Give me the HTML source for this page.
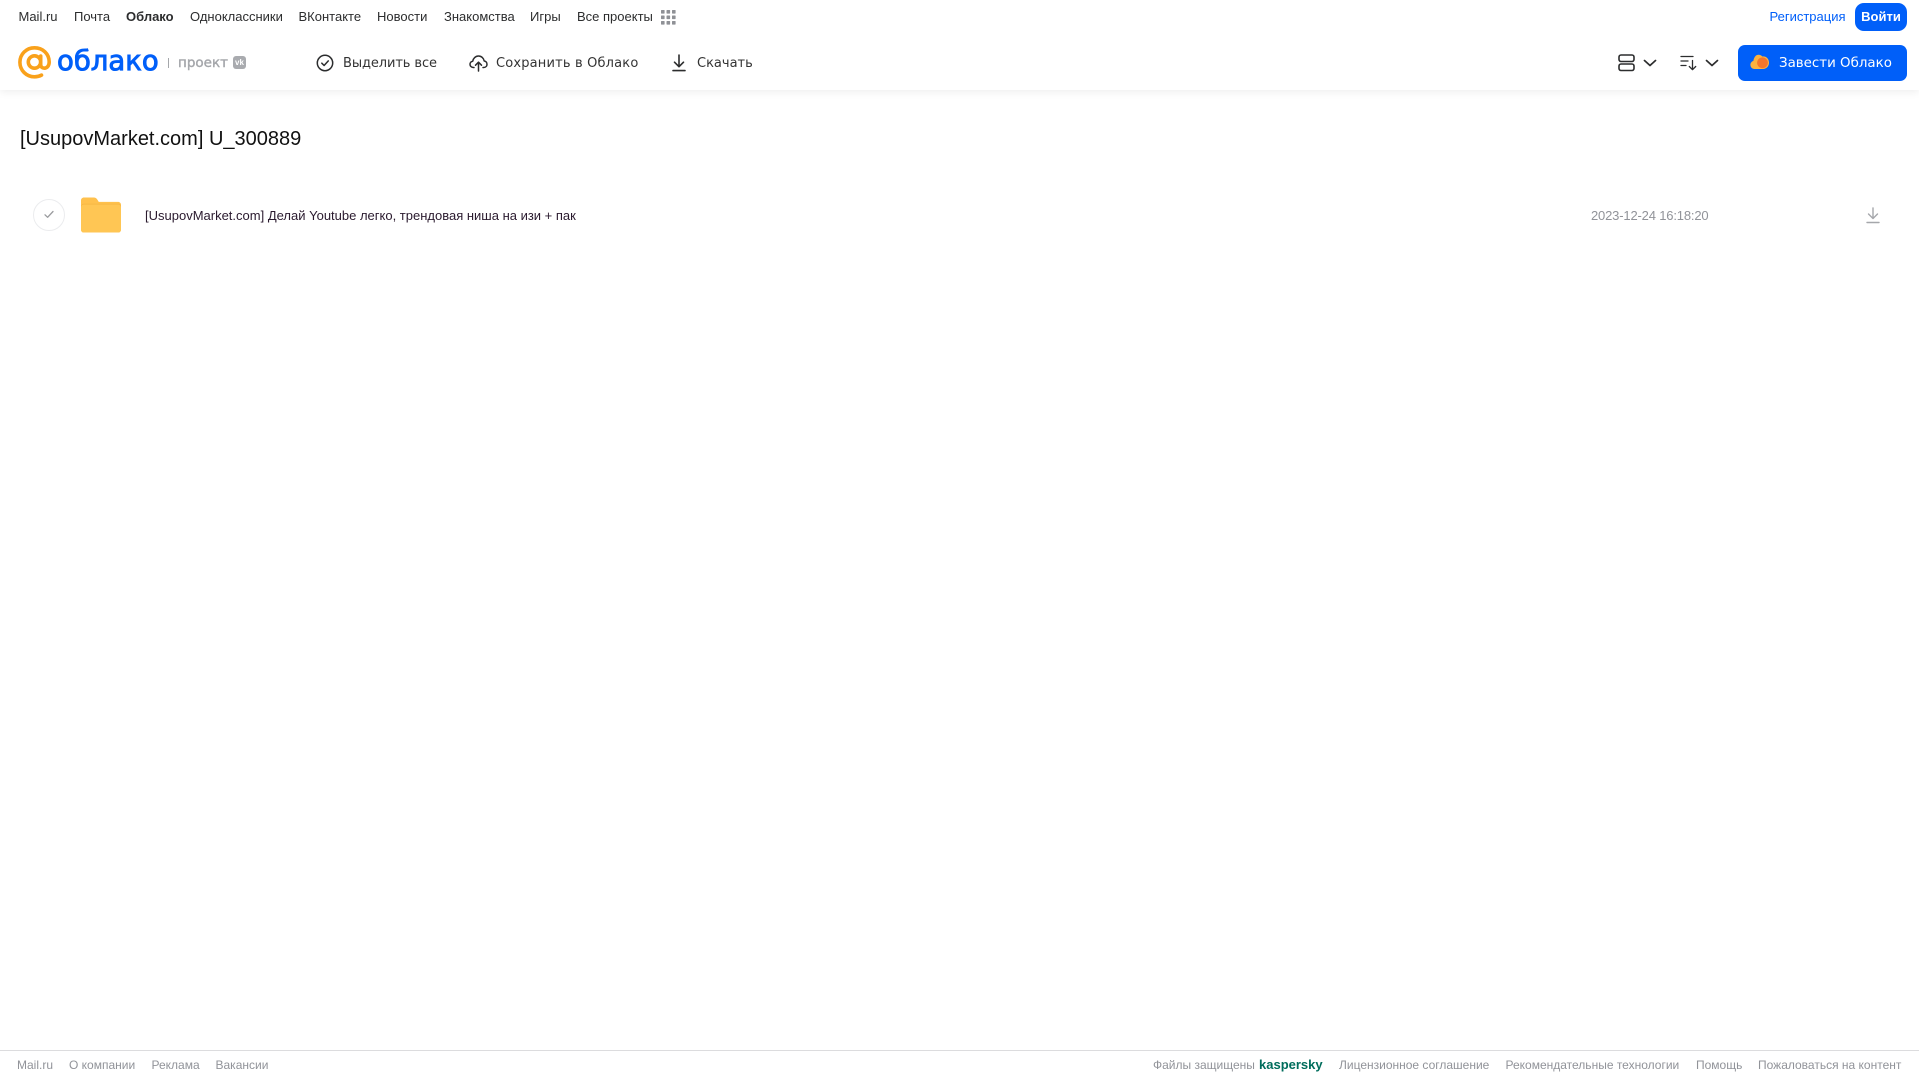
<!DOCTYPE html>
<html lang="ru">
<head>
<meta charset="utf-8">
<title>Облако</title>
<style>
html,body{margin:0;padding:0;background:#fff;}
body{width:1919px;height:1079px;position:relative;overflow:hidden;font-family:"Liberation Sans",Arial,sans-serif;}
.t{position:absolute;white-space:nowrap;line-height:20px;}
.n{top:7px;font-size:13px;color:#2c2d2e;}
.b{top:54px;font-size:13px;color:#333;font-family:"DejaVu Sans",sans-serif;}
.f{top:1055px;font-size:12px;color:#919399;}
svg{position:absolute;overflow:visible;}
#hdr{position:absolute;left:0;top:0;width:1919px;height:90px;background:#fff;box-shadow:0 2px 8px rgba(0,0,0,.07);}
</style>
</head>
<body>
<div id="hdr"></div>
<span class="t n" style="left:18.500px">Mail.ru</span>
<span class="t n" style="left:74px">Почта</span>
<span class="t n" style="left:126px;font-weight:bold">Облако</span>
<span class="t n" style="left:190px">Одноклассники</span>
<span class="t n" style="left:298.500px">ВКонтакте</span>
<span class="t n" style="left:377px">Новости</span>
<span class="t n" style="left:444px">Знакомства</span>
<span class="t n" style="left:530px">Игры</span>
<span class="t n" style="left:577px">Все проекты</span>
<svg style="left:661px;top:10px" width="15" height="15" fill="#8f9196">
<rect x="0" y="0" width="3.6" height="3.6" rx=".6"/><rect x="5.5" y="0" width="3.6" height="3.6" rx=".6"/><rect x="11" y="0" width="3.6" height="3.6" rx=".6"/>
<rect x="0" y="5.5" width="3.6" height="3.6" rx=".6"/><rect x="5.5" y="5.5" width="3.6" height="3.6" rx=".6"/><rect x="11" y="5.5" width="3.6" height="3.6" rx=".6"/>
<rect x="0" y="11" width="3.6" height="3.6" rx=".6"/><rect x="5.5" y="11" width="3.6" height="3.6" rx=".6"/><rect x="11" y="11" width="3.6" height="3.6" rx=".6"/>
</svg>
<span class="t" style="left:1769.500px;top:7px;font-size:13px;color:#005ff9">Регистрация</span>
<div style="position:absolute;left:1855px;top:3px;width:52px;height:28px;border-radius:9px;background:#005ff9;color:#fff;font-size:13px;font-weight:bold;line-height:27px;text-align:center">Войти</div>

<svg style="left:18px;top:46px" width="34" height="34" viewBox="0 0 34 34" fill="none" stroke="#f9a11b" stroke-width="3.6" stroke-linecap="round">
<circle cx="16.5" cy="16" r="6.2"/>
<path d="M22.7 10v8.5c0 2.4 1.6 3.7 3.6 3.7 2.6 0 4.9-2.2 4.9-6.2C31.200 7.700 24.700 1.800 16.500 1.800 8.300 1.800 1.900 8.200 1.900 16.300c0 8.100 6.400 14.500 14.600 14.500 2.700 0 4.900-.6 7-1.700"/>
</svg>
<span class="t" style="left:57px;top:44px;font-size:27.500px;line-height:34px;color:#005ff9;font-family:'DejaVu Sans',sans-serif;-webkit-text-stroke:.9px #005ff9;">облако</span>
<div style="position:absolute;left:168px;top:58px;width:1px;height:10px;background:#a5a7ab"></div>
<span class="t" style="left:178px;top:53px;font-size:13.500px;color:#a5a7ab;font-family:'DejaVu Sans',sans-serif;-webkit-text-stroke:.4px #a5a7ab">проект</span>
<div style="position:absolute;left:233px;top:56px;width:13px;height:13px;border-radius:3px;background:#a9abaf;color:#fff;font-size:8px;font-weight:bold;line-height:13px;text-align:center">vk</div>

<svg style="left:316px;top:54px" width="18" height="18" viewBox="0 0 18 18" fill="none" stroke="#2c2d2e" stroke-width="1.500" stroke-linecap="round" stroke-linejoin="round">
<circle cx="9" cy="9" r="7.700"/><path d="M5.800 9.200l2.300 2.300 4.200-4.600"/>
</svg>
<span class="t b" style="left:343px;letter-spacing:-.1px">Выделить все</span>
<svg style="left:469px;top:54px" width="19" height="18" viewBox="0 0 19 18" fill="none" stroke="#2c2d2e" stroke-width="1.500" stroke-linecap="round" stroke-linejoin="round">
<path d="M5 13.500H4.300C2.300 13.500 1 12 1 10.300c0-1.600 1.100-2.900 2.700-3.100C4.200 4.300 6.500 2 9.500 2c2.900 0 5.200 2.200 5.700 5 1.600.2 2.800 1.500 2.800 3.200 0 1.800-1.300 3.300-3.300 3.300H14"/>
<path d="M9.500 17V8.500M6.500 11.200l3-3 3 3"/>
</svg>
<span class="t b" style="left:496px;letter-spacing:.17px">Сохранить в Облако</span>
<svg style="left:671px;top:54px" width="16" height="18" viewBox="0 0 16 18" fill="none" stroke="#2c2d2e" stroke-width="1.600" stroke-linecap="round" stroke-linejoin="round">
<path d="M8 1v11.500M3.500 8.200L8 12.700l4.500-4.500M2 16.600h12"/>
</svg>
<span class="t b" style="left:697px">Скачать</span>

<svg style="left:1618px;top:54px" width="18" height="18" viewBox="0 0 18 18" fill="none" stroke="#2c2d2e" stroke-width="1.600">
<rect x="1" y="1" width="15" height="6.500" rx="2"/><rect x="1" y="10" width="15" height="6.500" rx="2"/>
</svg>
<svg style="left:1643px;top:59px" width="14" height="8" viewBox="0 0 14 8" fill="none" stroke="#2c2d2e" stroke-width="1.700" stroke-linecap="round" stroke-linejoin="round"><path d="M1.500 1.500L7 6.500l5.500-5"/></svg>
<svg style="left:1680px;top:55px" width="18" height="16" viewBox="0 0 18 16" fill="none" stroke="#2c2d2e" stroke-width="1.300" stroke-linecap="round" stroke-linejoin="round">
<path d="M1 1.500h12M1 6h7M1 10.500h5M12.500 5.500v9M9.300 11.500l3.200 3.200 3.200-3.200"/>
</svg>
<svg style="left:1705px;top:59px" width="14" height="8" viewBox="0 0 14 8" fill="none" stroke="#2c2d2e" stroke-width="1.700" stroke-linecap="round" stroke-linejoin="round"><path d="M1.500 1.500L7 6.500l5.500-5"/></svg>

<div style="position:absolute;left:1738px;top:45px;width:169px;height:36px;border-radius:7px;background:#005ff9"></div>
<svg style="left:1750px;top:54px" width="20" height="17" viewBox="0 0 20 17">
<path d="M6.500 1.200C8.600.2 11 .8 12.300 2.500c3-.6 6.700 1.700 6.700 6.300 0 3.700-2.800 6.200-6 6.200H4.500C2 15 .4 13 .4 10.900c0-2 1.400-3.500 3-4C3.700 4.500 4.800 2.200 6.500 1.200z" fill="#fcb23f"/>
<circle cx="12.500" cy="8.800" r="5.400" fill="#f4762c"/>
</svg>
<span class="t" style="left:1779px;top:54px;font-size:13.400px;color:#fff;font-family:'DejaVu Sans',sans-serif">Завести Облако</span>

<span class="t" style="left:20px;top:127px;font-size:20px;line-height:24px;color:#111">[UsupovMarket.com] U_300889</span>

<div style="position:absolute;left:33px;top:199px;width:30px;height:30px;border:1px solid #ebecee;border-radius:50%"></div>
<svg style="left:44px;top:210px" width="10" height="9" viewBox="0 0 10 9" fill="none" stroke="#9a9b9e" stroke-width="1.300" stroke-linecap="round" stroke-linejoin="round"><path d="M1 4.800l2.600 2.500L9 1.500"/></svg>
<svg style="left:81px;top:197px" width="40" height="36" viewBox="0 0 41 36">
<path d="M0 3C0 1.300 1.300 0 3 0h10c1.800 0 2.800.8 3.600 2l1.600 2.500H38c1.700 0 3 1.300 3 3V33c0 1.700-1.300 3-3 3H3c-1.700 0-3-1.300-3-3z" fill="#ffc14d"/>
<path d="M0 9.500C0 7.800 1.300 6.500 3 6.500h35c1.700 0 3 1.300 3 3V33c0 1.700-1.300 3-3 3H3c-1.700 0-3-1.300-3-3z" fill="#ffc654" />
<path d="M0 9.500C0 7.800 1.300 6.500 3 6.500h35c1.700 0 3 1.300 3 3v.8c0-1.700-1.300-3-3-3H3c-1.700 0-3 1.300-3 3z" fill="#f5b440"/>
</svg>
<span class="t" style="left:145px;top:206px;font-size:13px;color:#2a1a2e">[UsupovMarket.com] Делай Youtube легко, трендовая ниша на изи + пак</span>
<span class="t" style="left:1591px;top:206px;font-size:13px;letter-spacing:-.17px;color:#919399">2023-12-24 16:18:20</span>
<svg style="left:1866px;top:207px" width="14" height="17" viewBox="0 0 14 17" fill="none" stroke="#a5a7ab" stroke-width="1.400" stroke-linecap="round" stroke-linejoin="round">
<path d="M7 1v10.500M2.500 7L7 11.500 11.500 7M1 15.500h12"/>
</svg>

<div style="position:absolute;left:0;top:1050px;width:1919px;height:1px;background:#dcdcde"></div>
<span class="t f" style="left:17px">Mail.ru</span>
<span class="t f" style="left:69px">О компании</span>
<span class="t f" style="left:151.500px">Реклама</span>
<span class="t f" style="left:215.500px">Вакансии</span>
<span class="t f" style="left:1153px">Файлы защищены</span>
<span class="t f" style="left:1259px;color:#006d5c;font-weight:bold;font-size:13px">kaspersky</span>
<span class="t f" style="left:1339px">Лицензионное соглашение</span>
<span class="t f" style="left:1505.500px">Рекомендательные технологии</span>
<span class="t f" style="left:1696px">Помощь</span>
<span class="t f" style="left:1758px">Пожаловаться на контент</span>
</body>
</html>
